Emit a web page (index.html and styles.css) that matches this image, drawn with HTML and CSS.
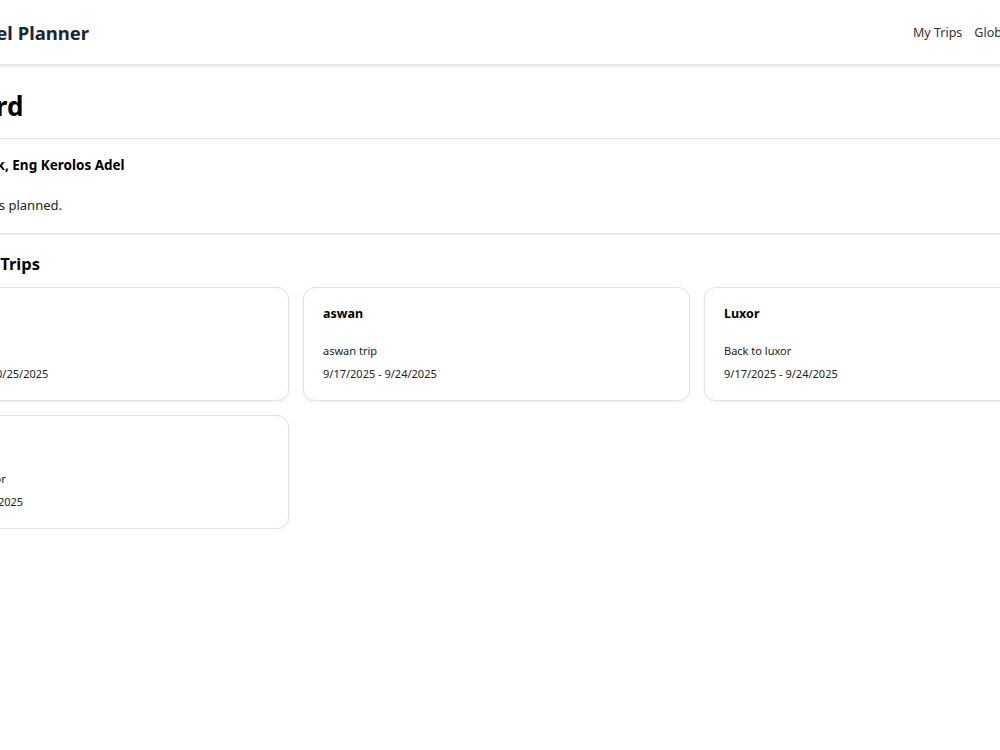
FILE: index.html
```html
<!DOCTYPE html>
<html lang="en">
<head>
<meta charset="utf-8">
<title>Travel Planner</title>
<link rel="stylesheet" href="styles.css">
</head>
<body>
<div class="page">
  <header class="navbar">
    <div class="brand">Travel Planner</div>
    <nav class="links">
      <a href="#">My Trips</a>
      <a href="#">Global Trips</a>
      <a href="#">Profile</a>
      <a href="#">Logout</a>
    </nav>
  </header>
  <main class="main">
    <h1 class="title">Dashboard</h1>
    <section class="welcome">
      <h2 class="welcome-name">Welcome back, Eng Kerolos Adel</h2>
      <p class="welcome-text">You have 4 trips planned.</p>
    </section>
    <section class="trips">
      <h2 class="trips-title">Recent Trips</h2>
      <div class="grid">
        <div class="card">
          <h3 class="card-title">Cairo</h3>
          <p class="card-desc">Cairo trip</p>
          <p class="card-date">10/18/2025 - 10/25/2025</p>
        </div>
        <div class="card">
          <h3 class="card-title">aswan</h3>
          <p class="card-desc">aswan trip</p>
          <p class="card-date">9/17/2025 - 9/24/2025</p>
        </div>
        <div class="card">
          <h3 class="card-title">Luxor</h3>
          <p class="card-desc">Back to luxor</p>
          <p class="card-date">9/17/2025 - 9/24/2025</p>
        </div>
        <div class="card">
          <h3 class="card-title">Dahab</h3>
          <p class="card-desc">Holiday in Luxor</p>
          <p class="card-date">9/1/2025 - 9/8/2025</p>
        </div>
      </div>
    </section>
  </main>
</div>
</body>
</html>
```

FILE: styles.css
```css
html, body {
  margin: 0;
  padding: 0;
  background: #ffffff;
  overflow: hidden;
}
body {
  font-family: "Noto Sans", "Open Sans", "Liberation Sans", sans-serif;
  color: #111;
}
.page {
  width: 1240px;
  margin-left: -120px;
}
.navbar {
  height: 64px;
  display: flex;
  align-items: center;
  padding-left: 77px;
  box-shadow: 0 2px 4px rgba(0, 0, 0, 0.13);
}
.brand {
  flex: 0 0 956px;
  font-size: 18.5px;
  font-weight: 700;
  color: #1c2438;
}
.links {
  display: flex;
  flex-shrink: 0;
  gap: 12px;
}
.links a {
  font-size: 12.5px;
  color: #333;
  text-decoration: none;
  white-space: nowrap;
}
.main {
  width: 1211px;
}
.title {
  margin: 0;
  padding: 25px 0 15px 3px;
  font-size: 26px;
  font-weight: 700;
  color: #000;
  line-height: 34px;
  border-bottom: 1px solid #e4e4e4;
}
.welcome {
  padding: 16px 0 18px 22px;
  border-bottom: 2px solid #e8e8e8;
}
.welcome-name {
  margin: 0;
  padding-left: 6px;
  font-size: 13.5px;
  font-weight: 700;
  line-height: 20px;
  color: #000;
}
.welcome-text {
  margin: 20px 0 0;
  padding-left: 6px;
  font-size: 13px;
  line-height: 20px;
  color: #222;
}
.trips {
  padding-top: 17px;
}
.trips-title {
  margin: 0 0 11px;
  padding-left: 59px;
  font-size: 16.5px;
  font-weight: 700;
  line-height: 24px;
  color: #000;
}
.grid {
  margin-left: 22px;
  display: grid;
  grid-template-columns: repeat(3, 387px);
  gap: 14px;
}
.card {
  height: 114px;
  box-sizing: border-box;
  padding: 17px 19px 0;
  border: 1px solid #e4e4e4;
  border-radius: 12px;
  box-shadow: 0 1px 3px rgba(0, 0, 0, 0.08);
  background: #fff;
}
.card-title {
  margin: 0;
  font-size: 12.5px;
  font-weight: 700;
  line-height: 18px;
  color: #000;
}
.card-desc {
  margin: 20px 0 0;
  font-size: 11px;
  line-height: 16px;
  color: #222;
}
.card-date {
  margin: 7px 0 0;
  font-size: 11px;
  line-height: 16px;
  color: #222;
}
```
